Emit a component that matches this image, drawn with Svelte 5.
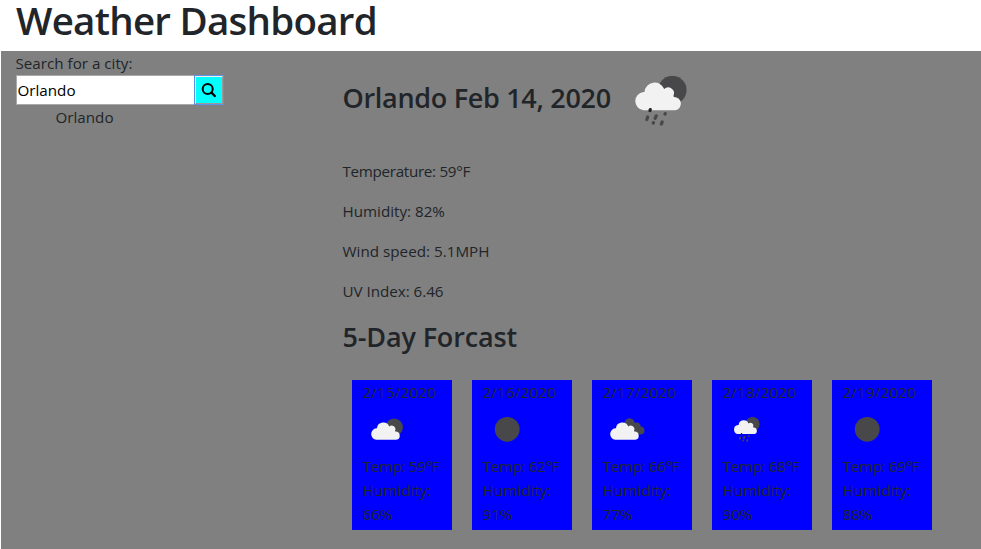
<script>
  let city = $state('Orlando');
  const history = ['Orlando'];
  const stats = [
    { text: 'Temperature: 59°F', spacing: -0.3 },
    { text: 'Humidity: 82%', spacing: 0 },
    { text: 'Wind speed: 5.1MPH', spacing: 0.02 },
    { text: 'UV Index: 6.46', spacing: -0.03 }
  ];
  const days = [
    { date: '2/15/2020', icon: 'partly', temp: 59, humidity: 66 },
    { date: '2/16/2020', icon: 'clear', temp: 62, humidity: 91 },
    { date: '2/17/2020', icon: 'clouds', temp: 66, humidity: 77 },
    { date: '2/18/2020', icon: 'rain', temp: 68, humidity: 90 },
    { date: '2/19/2020', icon: 'clear', temp: 69, humidity: 88 }
  ];
</script>

{#snippet cloud()}
  <path d="M9.5 34.2A9.2 9.2 0 0 1 9.5 15.9L10.5 15.9A10.2 10.2 0 0 1 30.2 13.1A5.8 5.8 0 0 1 39.5 19.6L39.8 20.9A6.7 6.7 0 0 1 41.3 34.2Z" fill="#f2f2f2" />
{/snippet}

{#snippet rainy()}
  <circle cx="38.4" cy="14" r="14.2" fill="#48484a" />
  {@render cloud()}
  <g stroke="#48484a" stroke-width="3.2" stroke-linecap="round">
    <path d="M16.3 33.6l-.4 1" stroke="#222" />
    <path d="M13.7 41l-.9 2.6M22.3 39.8l-1.2 2.6M31.2 37.6l-.2.5M19.4 46.6l-.2.5M28.2 46l-.9 2" />
  </g>
{/snippet}

<div class="page">
  <h1>Weather Dashboard</h1>
  <main>
    <aside>
      <label for="city">Search for a city:</label>
      <div class="search">
        <input id="city" bind:value={city} />
        <button aria-label="Search">
          <svg width="16" height="16" viewBox="0 0 16 16" fill="none" stroke="#000">
            <circle cx="6.7" cy="6.9" r="5" stroke-width="2" />
            <path d="M10.5 10.7L13.8 14" stroke-width="2.4" stroke-linecap="round" />
          </svg>
        </button>
      </div>
      <ul>
        {#each history as name}<li>{name}</li>{/each}
      </ul>
    </aside>
    <section>
      <div class="current">
        <h3 class="place">Orlando Feb 14, 2020</h3>
        <svg class="now" width="54" height="52" viewBox="0 0 54 52">{@render rainy()}</svg>
      </div>
      {#each stats as stat}<p style="letter-spacing: {stat.spacing}px">{stat.text}</p>{/each}
      <h3 class="forecast-title">5-Day Forcast</h3>
      <div class="cards">
        {#each days as day}
          <article>
            <div class="date">{day.date}</div>
            <svg width="50" height="50" viewBox="0 0 50 50">
              {#if day.icon === 'partly'}
                <g transform="translate(8.4 13.4) scale(.625)">
                  <circle cx="38" cy="14" r="14" fill="#48484a" />
                  {@render cloud()}
                </g>
              {:else if day.icon === 'clear'}
                <circle cx="25.2" cy="24.3" r="12.4" fill="#48484a" />
              {:else if day.icon === 'clouds'}
                <g fill="#48484a">
                  <circle cx="27.6" cy="18.5" r="5.2" />
                  <circle cx="34.6" cy="21.5" r="4" />
                  <circle cx="38.4" cy="25.6" r="4" />
                  <path d="M25 19h9l4 10H26z" />
                </g>
                <g transform="translate(7.4 13.4) scale(.625)">{@render cloud()}</g>
              {:else}
                <g transform="translate(11.4 12) scale(.5)">{@render rainy()}</g>
              {/if}
            </svg>
            <div class="temp">Temp: {day.temp}°F</div>
            <div class="humidity">Humidity: {day.humidity}%</div>
          </article>
        {/each}
      </div>
    </section>
  </main>
</div>

<style>
  :global(body) {
    margin: 0;
    background: #fff;
    overflow: hidden;
  }
  .page {
    height: 549px;
    display: flex;
    flex-direction: column;
    padding-left: 1px;
    box-sizing: border-box;
    color: #212529;
    font: 15.2px/24px 'Open Sans', 'Noto Sans', sans-serif;
    letter-spacing: 0;
  }
  h1 {
    margin: 0;
    padding: 0 15px;
    height: 51px;
    font-size: 38.5px;
    line-height: 41px;
    font-weight: 600;
    letter-spacing: -0.74px;
    white-space: nowrap;
  }
  main {
    flex: 1;
    display: flex;
    background: #808080;
  }
  aside {
    width: 326.5px;
    padding-left: 14.5px;
    box-sizing: border-box;
  }
  label {
    display: block;
    height: 24px;
  }
  .search {
    display: flex;
    height: 30px;
  }
  input {
    width: 179px;
    height: 30px;
    box-sizing: border-box;
    padding: 1px;
    border: 1px solid #a9a9a9;
    border-right: 0;
    background: #fff;
    color: #000;
    font: inherit;
    letter-spacing: inherit;
    outline: none;
  }
  button {
    width: 28px;
    height: 28px;
    margin-top: 1px;
    box-sizing: border-box;
    display: flex;
    align-items: center;
    justify-content: center;
    padding: 0;
    border: 1px solid #f0f0f0;
    border-right-color: #999;
    border-bottom-color: #999;
    background: #0ff;
    box-shadow: 0 0 0 1px #5b91e8;
  }
  ul {
    margin: 0;
    padding-left: 40px;
    list-style: none;
  }
  section {
    padding-left: 15px;
  }
  .current {
    display: flex;
    height: 108px;
    box-sizing: border-box;
    padding-top: 25px;
  }
  h3 {
    margin: 0;
    font-size: 27px;
    line-height: 44px;
    font-weight: 600;
    letter-spacing: -0.15px;
    white-space: nowrap;
  }
  .place {
    width: 291.3px;
    letter-spacing: -0.3px;
  }
  .now {
    flex: none;
  }
  p {
    margin: 0 0 16px;
  }
  .forecast-title {
    height: 61px;
    line-height: 36px;
  }
  .cards {
    display: flex;
    gap: 20px;
    padding-left: 9.5px;
  }
  article {
    width: 100px;
    height: 150px;
    box-sizing: border-box;
    padding: 0 10px;
    background: #00f;
  }
  article svg {
    display: block;
    height: 50px;
    margin-top: 1px;
    margin-bottom: -1px;
  }
  .date,
  .temp,
  .humidity {
    padding-left: 0.5px;
  }
  .date {
    letter-spacing: 0.15px;
  }
  .temp {
    letter-spacing: -0.33px;
    white-space: nowrap;
  }
  .humidity {
    letter-spacing: 0;
  }
</style>
